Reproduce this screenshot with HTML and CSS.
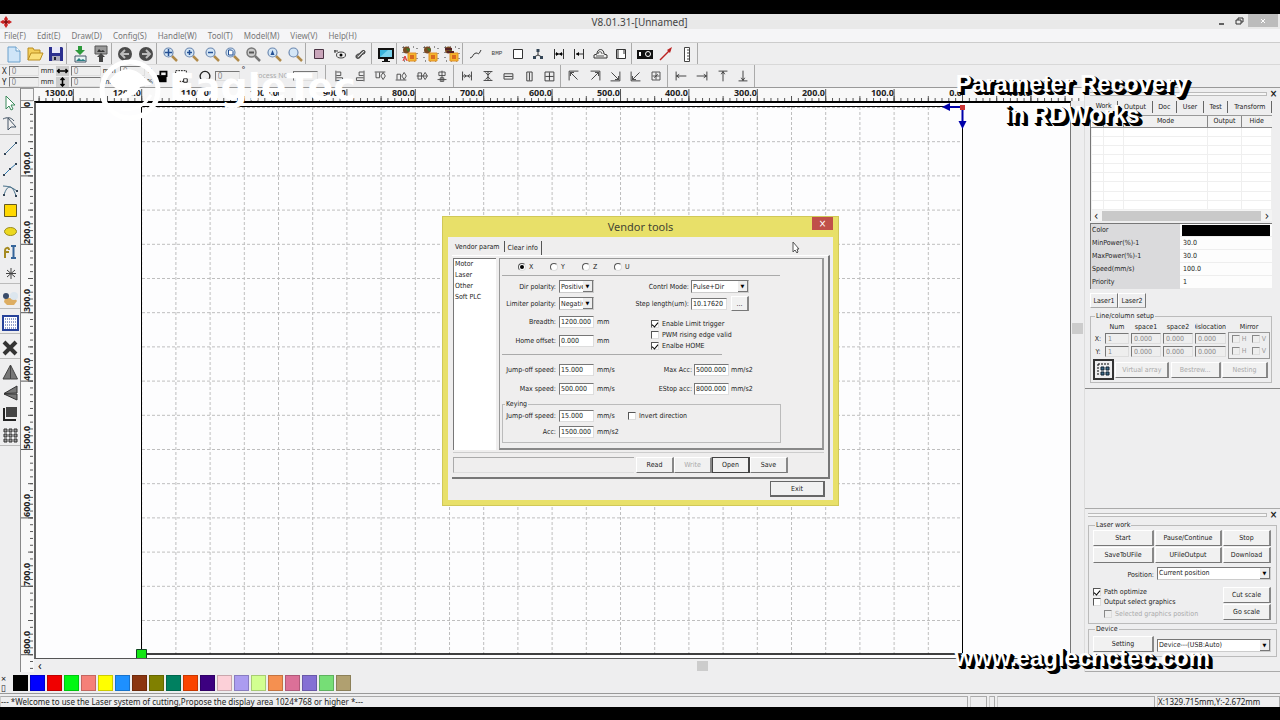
FILE: index.html
```html
<!DOCTYPE html>
<html lang="en">
<head>
<meta charset="utf-8">
<title>V8.01.31-[Unnamed]</title>
<link rel="stylesheet" href="styles.css">
</head>
<body>
<svg class="defs" aria-hidden="true">
  <symbol id="lens" viewBox="0 0 18 18">
    <path d="M11 11l5 5" stroke="#b08a4a" stroke-width="2.500"/>
    <circle cx="7.500" cy="7.500" r="4.500" fill="#d4e6f6" stroke="#6c88b0" stroke-width="1.200"/>
  </symbol>
  <symbol id="blocks" viewBox="0 0 18 18">
    <path d="M2 2h14v14H2z" fill="none" stroke="#333" stroke-dasharray="1 4"/>
    <circle cx="5.500" cy="5" r="3.500" fill="#7a4a22"/><path d="M5 3l4 1-2 3z" fill="#3a7a2a"/>
    <path d="M7 8h8v8H7z" fill="#f5b62c" stroke="#e0902a"/><path d="M9 10h4v4H9z" fill="#d96a20"/>
  </symbol>
</svg>

<div class="app">
  <header class="titlebar">
    <svg class="logo" viewBox="0 0 12 12"><path d="M6 0l2 3-1 2 2-1 3 2-3 2-2-1 1 2-2 3-2-3 1-2-2 1-3-2 3-2 2 1-1-2z" fill="#c22"/><path d="M6 4v4M4 6h4" stroke="#611"/></svg>
    <h1>V8.01.31-[Unnamed]</h1>
    <div class="winbtns">
      <button aria-label="Minimize"><svg viewBox="0 0 10 10"><path d="M2 8h5" stroke="#333" stroke-width="1.500"/></svg></button>
      <button aria-label="Restore"><svg viewBox="0 0 10 10"><path d="M2 4h5v4H2zM4 4V2h5v4H7" fill="none" stroke="#333"/></svg></button>
      <button class="close" aria-label="Close"><svg viewBox="0 0 10 10"><path d="M3 3l4 4M7 3l-4 4" stroke="#fff"/></svg></button>
    </div>
  </header>

  <nav class="menu">
    <button>File(F)</button><button>Edit(E)</button><button>Draw(D)</button><button>Config(S)</button><button>Handle(W)</button><button>Tool(T)</button><button>Model(M)</button><button>View(V)</button><button>Help(H)</button>
  </nav>

  <div class="toolbar">
    <div class="group g3">
      <button aria-label="New"><svg viewBox="0 0 18 18"><path d="M3 2h8l4 4v11H3z" fill="#cfe5f8" stroke="#6aa0cc"/><path d="M11 2v4h4" fill="#fff" stroke="#6aa0cc"/></svg></button>
      <button aria-label="Open"><svg viewBox="0 0 18 18"><path d="M2 15V3h5l1 2h6v3" fill="#f4cf5a" stroke="#b98c20"/><path d="M2 15L5 8h12l-3 7z" fill="#fbe07a" stroke="#b98c20"/></svg></button>
      <button aria-label="Save"><svg viewBox="0 0 18 18"><path d="M2 2h13l1 1v13H2z" fill="#2b2f8f"/><path d="M5 2h8v6H5z" fill="#e8e8f8"/><path d="M5 11h8v5H5z" fill="#aab"/><path d="M7 12h2v3H7z" fill="#223"/></svg></button>
    </div>
    <div class="group g2">
      <button aria-label="Import"><svg viewBox="0 0 18 18"><path d="M7 1h4v4h3l-5 5-5-5h3z" fill="#2d9a3c"/><path d="M4 11h11v6H4z" fill="#e8f4f4" stroke="#456"/><path d="M5 16l3-3 2 2 2-1 3 2z" fill="#2a7f86"/></svg></button>
      <button aria-label="Export"><svg viewBox="0 0 18 18"><path d="M3 1h12v8H3z" fill="#999" stroke="#555"/><path d="M5 7l2-3 2 2 2-1 2 2z" fill="#333"/><path d="M9 8l4 4h-2v5H7v-5H5z" fill="#444"/></svg></button>
    </div>
    <div class="group g2">
      <button aria-label="Undo"><svg viewBox="0 0 18 18"><circle cx="9" cy="9" r="7" fill="#4a4a4a"/><path d="M13 9H6M9 5L5 9l4 4" fill="none" stroke="#bbb" stroke-width="2"/></svg></button>
      <button aria-label="Redo"><svg viewBox="0 0 18 18"><circle cx="9" cy="9" r="7" fill="#4a4a4a"/><path d="M5 9h7M9 5l4 4-4 4" fill="none" stroke="#bbb" stroke-width="2"/></svg></button>
    </div>
    <div class="group g7">
      <button aria-label="Pan"><svg viewBox="0 0 18 18"><use href="#lens"/><path d="M7.500 4v7M4 7.500h7" stroke="#234f94" stroke-width="1.500"/></svg></button>
      <button aria-label="Zoom in"><svg viewBox="0 0 18 18"><use href="#lens"/><path d="M7.500 5v5M5 7.500h5" stroke="#234f94" stroke-width="1.500"/></svg></button>
      <button aria-label="Zoom out"><svg viewBox="0 0 18 18"><use href="#lens"/><path d="M5 7.500h5" stroke="#234f94" stroke-width="1.500"/></svg></button>
      <button aria-label="View page"><svg viewBox="0 0 18 18"><use href="#lens"/><path d="M5.500 5h3l1.500 1.500V10H5.500z" fill="#fff" stroke="#234f94"/></svg></button>
      <button aria-label="View all"><svg viewBox="0 0 18 18"><path d="M11 11l5 5" stroke="#777" stroke-width="2.500"/><circle cx="7.500" cy="7.500" r="4.500" fill="#ccc" stroke="#777" stroke-width="1.500"/><path d="M5 7.500h5" stroke="#555" stroke-width="2"/></svg></button>
      <button aria-label="View selection"><svg viewBox="0 0 18 18"><use href="#lens"/><path d="M5.500 10l2-5 2 5z" fill="#234f94"/></svg></button>
      <button aria-label="View frame"><svg viewBox="0 0 18 18"><use href="#lens"/></svg></button>
    </div>
    <div class="group g3">
      <button aria-label="Frame"><svg viewBox="0 0 18 18"><path d="M4.500 4.500h9v9h-9z" fill="#c9a5ba" stroke="#4a3344"/></svg></button>
      <button aria-label="Weld"><svg viewBox="0 0 18 18"><ellipse cx="10" cy="10" rx="4.500" ry="3" fill="none" stroke="#444"/><circle cx="10" cy="10" r="1.500"/><path d="M3 6h4M4 5v3" stroke="#333"/></svg></button>
      <button aria-label="Clean"><svg viewBox="0 0 18 18"><path d="M4 12c0-4 3-2 4-4s5-4 5-1-3 1-4 4-5 3-5 1z" fill="#777" stroke="#333"/><path d="M6 12l6-6" stroke="#ddd"/></svg></button>
    </div>
    <div class="group g1">
      <button aria-label="Preview"><svg viewBox="0 0 18 18"><path d="M1 3h16v11H1z" fill="#111"/><path d="M3 5h12v7H3z" fill="#3bb4dc"/><path d="M3 12l8-7h4v7z" fill="#79d3ee"/><path d="M7 14h4v2h2v1H5v-1h2z" fill="#111"/></svg></button>
    </div>
    <div class="group g3">
      <button aria-label="Path A"><svg viewBox="0 0 18 18"><use href="#blocks"/><path d="M2 16l2-5 2 5M3 14h2" fill="none" stroke="#d33"/></svg></button>
      <button aria-label="Path B"><svg viewBox="0 0 18 18"><use href="#blocks"/></svg></button>
      <button aria-label="Path C"><svg viewBox="0 0 18 18"><use href="#blocks"/><path d="M2 4h7M4 7h7" stroke="#522" stroke-width="2"/></svg></button>
    </div>
    <div class="group g8">
      <button aria-label="Smooth"><svg viewBox="0 0 18 18"><path d="M3 13c3 0 3-5 6-5s2 3 5-3" fill="none" stroke="#333"/></svg></button>
      <button class="bmp">BMP</button>
      <button aria-label="Rectangle"><svg viewBox="0 0 18 18"><path d="M4.500 4.500h9v9h-9z" fill="#fff" stroke="#333"/></svg></button>
      <button aria-label="Nodes"><svg viewBox="0 0 18 18"><path d="M9 6v4M5 12l4-2 4 2" fill="none" stroke="#333"/><path d="M7.500 4h3v3h-3zM4 11h3v3H4zM11 11h3v3h-3z" fill="#345"/></svg></button>
      <button aria-label="Gap"><svg viewBox="0 0 18 18"><path d="M4.500 4v10M13.500 4v10M4 9h10" fill="none" stroke="#333"/><path d="M6 7l3 2-3 2zM12 7l-3 2 3 2z"/></svg></button>
      <button aria-label="Offset"><svg viewBox="0 0 18 18"><path d="M4.500 4v10M13.500 4v10M6 9h7" fill="none" stroke="#333"/><path d="M9 7l-3 2 3 2z"/></svg></button>
      <button aria-label="Outline"><svg viewBox="0 0 18 18"><path d="M3 13v-3l3-1c0-6 7-6 7 0l3 1v3z" fill="#eee" stroke="#333"/><path d="M5 11h8M7 9c0-3 4-3 4 0" fill="none" stroke="#555"/></svg></button>
      <button aria-label="Ruler frame"><svg viewBox="0 0 18 18"><path d="M4.500 4.500h9v9h-9z" fill="#fff" stroke="#333"/><path d="M5 6h2M5 8h2M5 10h2M5 12h2M11 6h2M11 8h2" stroke="#333"/></svg></button>
    </div>
    <div class="group g3">
      <button aria-label="Camera"><svg viewBox="0 0 18 18"><path d="M1 5h16v9H1z" fill="#111"/><circle cx="12" cy="9" r="2.500" fill="none" stroke="#fff"/><path d="M3 7h2v4H3z" fill="#fff"/></svg></button>
      <button aria-label="Laser line"><svg viewBox="0 0 18 18"><path d="M3 15L13 5" stroke="#b22" stroke-width="1.500"/><path d="M15 2l-2 6-3-3z" fill="#b22"/></svg></button>
      <button aria-label="Measure"><svg viewBox="0 0 18 18"><path d="M6.500 2.500h5v14h-5z" fill="#fff" stroke="#444"/><path d="M9 5h2M9 8h2M9 11h2M9 14h2" stroke="#444"/></svg></button>
    </div>
  </div>

  <div class="toolbar second">
    <div class="coords">
      <label>X <input class="w30" value="0"></label><span>mm</span>
      <label>Y <input class="w30" value="0"></label><span>mm</span>
    </div>
    <div class="coords size">
      <label><svg viewBox="0 0 12 10"><path d="M1 5h10M3 3L1 5l2 2M9 3l2 2-2 2" fill="none" stroke="#000" stroke-width="1.500"/></svg><input class="w30" aria-label="Width" value="0"></label><span>mm</span>
      <label><svg viewBox="0 0 12 10"><path d="M6 1v8M4 3l2-2 2 2M4 7l2 2 2-2" fill="none" stroke="#000" stroke-width="1.500"/></svg><input class="w30" aria-label="Height" value="0"></label><span>mm</span>
    </div>
    <div class="coords">
      <input class="w24" aria-label="Width scale" value="0"><span>%</span>
      <input class="w24" aria-label="Height scale" value="0"><span>%</span>
    </div>
    <div class="group rot">
      <button aria-label="Lock ratio"><svg viewBox="0 0 18 18"><path d="M2 8h11v8H2z"/><path d="M6 8V4h7v6" fill="none" stroke="#000" stroke-width="2"/></svg></button>
      <button aria-label="Anchor"><svg viewBox="0 0 18 18"><path d="M3 3h12v12H3z" fill="#fff" stroke="#000" stroke-dasharray="2 1"/><path d="M12 12h4v4h-4z" fill="#fff" stroke="#000"/></svg></button>
      <button class="turn" aria-label="Rotate"><svg viewBox="0 0 18 18"><path d="M6 14A5.500 5.500 0 1 1 12 14" fill="none" stroke="#222" stroke-width="1.500"/><path d="M10 12l5 0-3 4z"/></svg></button>
      <input class="w24" aria-label="Angle" value="0"><span>°</span>
      <label class="proc">Process NO: <input class="w24"></label>
    </div>
    <div class="group g6">
      <button aria-label="Align left"><svg viewBox="0 0 18 18"><path d="M5.500 3v12M6 4.500h5v4H6M6 11h7v3H6" fill="none" stroke="#444"/></svg></button>
      <button aria-label="Align right"><svg viewBox="0 0 18 18"><path d="M13.500 3v12M13 4.500H8v4h5M13 11H5v3h8" fill="none" stroke="#444"/></svg></button>
      <button aria-label="Align top"><svg viewBox="0 0 18 18"><path d="M3 4.500h12M4.500 5v6h4V5M10 9l2.500-4 2.500 4-2.500 4z" fill="none" stroke="#444"/></svg></button>
      <button aria-label="Align bottom"><svg viewBox="0 0 18 18"><path d="M3 13.500h12M4.500 13V7h4v6M10 9l2.500-4 2.500 4-2.500 4z" fill="none" stroke="#444"/></svg></button>
      <button aria-label="Align middle"><svg viewBox="0 0 18 18"><path d="M3 9h12M4.500 5.500h4v7h-4zM10 9l2.500-4 2.500 4-2.500 4z" fill="none" stroke="#444"/></svg></button>
      <button aria-label="Align centre"><svg viewBox="0 0 18 18"><path d="M9 3v12M5.500 4.500h7v4h-7zM4 13h10M7 11h4v4H7z" fill="none" stroke="#444"/></svg></button>
    </div>
    <div class="group g5">
      <button aria-label="Space horizontally"><svg viewBox="0 0 18 18"><path d="M4 4v10M14 4v10M4 9h10M6 7l2 2-2 2M12 7l-2 2 2 2" fill="none" stroke="#333"/></svg></button>
      <button aria-label="Space vertically"><svg viewBox="0 0 18 18"><path d="M4 4h10M4 14h10M9 4v10M6 5l3 3 3-3M6 13l3-3 3 3" fill="none" stroke="#333"/></svg></button>
      <button aria-label="Same width"><svg viewBox="0 0 18 18"><path d="M4.500 6.500h10v6h-10zM5 9.500h9" fill="none" stroke="#333"/></svg></button>
      <button aria-label="Same height"><svg viewBox="0 0 18 18"><path d="M6.500 4.500h6v10h-6zM9.500 5v9" fill="none" stroke="#333"/></svg></button>
      <button aria-label="Same size"><svg viewBox="0 0 18 18"><path d="M4.500 4.500h10v10h-10zM9.500 5v9M5 9.500h9" fill="none" stroke="#333"/></svg></button>
    </div>
    <div class="group g5">
      <button aria-label="To top left"><svg viewBox="0 0 18 18"><path d="M3.500 14V3.500H14M5 5l8 8M5 9V5h4" fill="none" stroke="#333"/></svg></button>
      <button aria-label="To top right"><svg viewBox="0 0 18 18"><path d="M4 3.500h10.500V14M13 5l-8 8M13 9V5H9" fill="none" stroke="#333"/></svg></button>
      <button aria-label="To bottom right"><svg viewBox="0 0 18 18"><path d="M4 14.500h10.500V4M13 13L5 5M9 13h4V9" fill="none" stroke="#333"/></svg></button>
      <button aria-label="To bottom left"><svg viewBox="0 0 18 18"><path d="M3.500 4v10.500H14M5 13l8-8M5 9v4h4" fill="none" stroke="#333"/></svg></button>
      <button aria-label="To centre"><svg viewBox="0 0 18 18"><path d="M4.500 4.500h9v9h-9zM9 5v8M5 9h8M7 11l4-4" fill="none" stroke="#444"/></svg></button>
    </div>
    <div class="group g4">
      <button aria-label="To left"><svg viewBox="0 0 18 18"><path d="M3.500 4v10M4 9h11M7 7L4 9l3 2" fill="none" stroke="#333"/></svg></button>
      <button aria-label="To right"><svg viewBox="0 0 18 18"><path d="M14.500 4v10M14 9H3M11 7l3 2-3 2" fill="none" stroke="#333"/></svg></button>
      <button aria-label="To top"><svg viewBox="0 0 18 18"><path d="M4 3.500h10M9 4v11M7 7l2-3 2 3" fill="none" stroke="#333"/></svg></button>
      <button aria-label="To bottom"><svg viewBox="0 0 18 18"><path d="M4 14.500h10M9 14V3M7 11l2 3 2-3" fill="none" stroke="#333"/></svg></button>
    </div>
  </div>

  <main class="work">
    <div class="tools">
      <div class="vgroup v2">
        <button aria-label="Select"><svg viewBox="0 0 18 18"><path d="M5 2l9 9-4 0 2 4-2 1-2-4-3 3z" fill="#fff" stroke="#3a8a5a"/></svg></button>
        <button aria-label="Edit nodes"><svg viewBox="0 0 18 18"><path d="M2 4c4-2 8-2 11 2M7 3v12l3-3h5z" fill="none" stroke="#456"/></svg></button>
      </div>
      <div class="vgroup v7">
        <button aria-label="Line"><svg viewBox="0 0 18 18"><path d="M4 15L15 4" stroke="#46789c"/><path d="M3 14h2v2H3zM14 3h2v2h-2z" fill="#345"/></svg></button>
        <button aria-label="Polyline"><svg viewBox="0 0 18 18"><path d="M3 15l6-6 6-5" stroke="#2d76ac" fill="none"/><path d="M2 14h2v2H2zM8 8h2v2H8zM14 3h2v2h-2z" fill="#345"/></svg></button>
        <button aria-label="Bezier"><svg viewBox="0 0 18 18"><path d="M3 14C6 4 11 2 15 15M2 5c6 0 10 2 14 5" fill="none" stroke="#456e88"/><path d="M2 13h2v2H2zM14 14h2v2h-2zM15 9h2v2h-2z" fill="#345"/></svg></button>
        <button aria-label="Rectangle"><svg viewBox="0 0 18 18"><path d="M3.500 3.500h12v12h-12z" fill="#ffd800" stroke="#665a20"/></svg></button>
        <button aria-label="Ellipse"><svg viewBox="0 0 18 18"><ellipse cx="9.500" cy="9.500" rx="6" ry="4" fill="#ecd820" stroke="#9a8c20"/></svg></button>
        <button aria-label="Text"><svg viewBox="0 0 18 18"><path d="M4 15V8c0-4 4-4 4-1M3 9h5" fill="none" stroke="#a58a20" stroke-width="2"/><path d="M10 3h5M10 15h5M12.500 3v12" stroke="#36659a" stroke-width="2"/></svg></button>
        <button aria-label="Point"><svg viewBox="0 0 18 18"><path d="M10 4v11M5 9.500h10M6 6l8 7M14 6l-8 7" stroke="#444"/></svg></button>
      </div>
      <div class="vgroup v1"><button aria-label="Capture"><svg viewBox="0 0 18 18"><path d="M4 9h10l2 3-3 4H6l-3-3z" fill="#ddad62"/><circle cx="5" cy="7" r="3" fill="#3a4c6a"/><circle cx="13" cy="7" r="4" fill="#dce6ee"/></svg></button></div>
      <div class="vgroup v1"><button aria-label="Grid"><svg viewBox="0 0 18 18"><path d="M2 2h15v14H2z" fill="#fff" stroke="#26429a" stroke-width="2"/><path d="M4 5h12M4 8h12M4 11h12M4 14h12" stroke="#26429a" stroke-dasharray="1 1"/></svg></button></div>
      <div class="vgroup v1"><button aria-label="Delete"><svg viewBox="0 0 18 18"><path d="M3 3l12 12M15 3L3 15" stroke="#333" stroke-width="4"/></svg></button></div>
      <div class="vgroup v4">
        <button aria-label="Mirror vertically"><svg viewBox="0 0 18 18"><path d="M9.500 2v14H2zM9.500 2l7 14h-7z" fill="#777" stroke="#444"/></svg></button>
        <button aria-label="Mirror horizontally"><svg viewBox="0 0 18 18"><path d="M3 9.500L16 2v7zM3 10l13 6v-6z" fill="#777" stroke="#333"/></svg></button>
        <button aria-label="Origin"><svg viewBox="0 0 18 18"><path d="M5 2h11v10H5z" fill="#444"/><path d="M3 3v12h12" fill="none" stroke="#222" stroke-width="2"/></svg></button>
        <button aria-label="Array"><svg viewBox="0 0 18 18"><path d="M3 3h3v3H3zM8 3h3v3H8zM13 3h3v3h-3zM3 8h3v3H3zM8 8h3v3H8zM13 8h3v3h-3zM3 13h3v3H3zM8 13h3v3H8zM13 13h3v3h-3z" fill="#999" stroke="#333"/></svg></button>
      </div>
    </div>

    <div class="stage">
      <div class="corner"></div>
      <svg class="hruler">
        <defs>
          <pattern id="hs" patternUnits="userSpaceOnUse" x="962" y="88" width="6.840" height="13"><path d="M.5 10v3" stroke="#555"/></pattern>
          <pattern id="hm" patternUnits="userSpaceOnUse" x="962" y="88" width="34.200" height="13"><path d="M.5 8v5" stroke="#555"/></pattern>
          <pattern id="hl" patternUnits="userSpaceOnUse" x="962" y="88" width="68.400" height="13"><path d="M.5 1v12" stroke="#555"/></pattern>
        </defs>
        <g transform="translate(-34 -88)">
          <g text-anchor="end">
            <text x="73" y="96">1300.0</text><text x="141" y="96">1200.0</text><text x="209" y="96">1100.0</text><text x="278" y="96">1000.0</text><text x="346" y="96">900.0</text><text x="415" y="96">800.0</text><text x="483" y="96">700.0</text><text x="552" y="96">600.0</text><text x="620" y="96">500.0</text><text x="688" y="96">400.0</text><text x="757" y="96">300.0</text><text x="825" y="96">200.0</text><text x="894" y="96">100.0</text><text x="962" y="96">0.0</text><text x="1031" y="96">-100.0</text>
          </g>
          <rect x="34" y="88" width="100%" height="13" fill="url(#hs)"/>
          <rect x="34" y="88" width="100%" height="13" fill="url(#hm)"/>
          <rect x="34" y="88" width="100%" height="13" fill="url(#hl)"/>
        </g>
      </svg>
      <svg class="vruler">
        <defs>
          <pattern id="vs" patternUnits="userSpaceOnUse" x="21" y="107" width="13" height="6.840"><path d="M9 .5h3" stroke="#555"/></pattern>
          <pattern id="vm" patternUnits="userSpaceOnUse" x="21" y="107" width="13" height="34.200"><path d="M7 .5h5" stroke="#555"/></pattern>
          <pattern id="vl" patternUnits="userSpaceOnUse" x="21" y="107" width="13" height="68.400"><path d="M0 .5h12" stroke="#555"/></pattern>
        </defs>
        <g transform="translate(-21 -101)">
          <text transform="translate(30 107) rotate(-90)">0</text>
          <text transform="translate(30 175) rotate(-90)">100.0</text>
          <text transform="translate(30 244) rotate(-90)">200.0</text>
          <text transform="translate(30 312) rotate(-90)">300.0</text>
          <text transform="translate(30 381) rotate(-90)">400.0</text>
          <text transform="translate(30 449) rotate(-90)">500.0</text>
          <text transform="translate(30 517) rotate(-90)">600.0</text>
          <text transform="translate(30 586) rotate(-90)">700.0</text>
          <text transform="translate(30 654) rotate(-90)">800.0</text>
          <rect x="21" y="101" width="13" height="100%" fill="url(#vs)"/>
          <rect x="21" y="101" width="13" height="100%" fill="url(#vm)"/>
          <rect x="21" y="101" width="13" height="100%" fill="url(#vl)"/>
        </g>
      </svg>
      <div class="canvas">
        <svg>
          <defs>
            <pattern id="gx" patternUnits="userSpaceOnUse" x="962" y="107" width="34.200" height="5"><path d="M.5 0v3" stroke="#bdbdbd"/></pattern>
            <pattern id="gy" patternUnits="userSpaceOnUse" x="142" y="107" width="5" height="34.200"><path d="M0 .5h3" stroke="#bdbdbd"/></pattern>
          </defs>
          <g transform="translate(-36 -103)">
            <rect x="142" y="107" width="820" height="547" fill="url(#gx)"/>
            <rect x="142" y="107" width="820" height="547" fill="url(#gy)"/>
            <path d="M141.500 654V106.500H962.500V654z" fill="none" stroke="#000"/>
            <path d="M136 654h827" stroke="#000"/>
            <path d="M962 107h-17M962.500 107v18" stroke="#00a" stroke-width="2"/>
            <path d="M942 107l8-4v8zM962.500 129l-4-8h8z" fill="#00a"/>
            <path d="M960 105h5v5h-5z" fill="#c33"/>
            <path d="M136.500 649.500h10v9h-10z" fill="#14e614" stroke="#142"/>
          </g>
        </svg>
      </div>
      <div class="vscroll"><i></i></div>
      <div class="hscroll"><span>‹</span><i></i></div>
    </div>

    <aside class="side">
      <section class="dock">
        <div class="grip"><i></i><button aria-label="Close panel">×</button></div>
        <nav class="tabs"><button class="on">Work</button><button>Output</button><button>Doc</button><button>User</button><button>Test</button><button>Transform</button></nav>
        <div class="layers">
          <table>
            <colgroup><col class="c1"><col class="c2"><col class="c3"><col class="c4"><col></colgroup>
            <thead><tr><th></th><th></th><th>Mode</th><th>Output</th><th>Hide</th></tr></thead>
            <tbody>
              <tr><td></td><td></td><td></td><td></td><td></td></tr><tr><td></td><td></td><td></td><td></td><td></td></tr><tr><td></td><td></td><td></td><td></td><td></td></tr><tr><td></td><td></td><td></td><td></td><td></td></tr><tr><td></td><td></td><td></td><td></td><td></td></tr><tr><td></td><td></td><td></td><td></td><td></td></tr><tr><td></td><td></td><td></td><td></td><td></td></tr><tr><td></td><td></td><td></td><td></td><td></td></tr><tr><td></td><td></td><td></td><td></td><td></td></tr>
            </tbody>
          </table>
          <div class="bar"><span>‹</span><i></i><span>›</span></div>
        </div>
        <dl class="props">
          <dt>Color</dt><dd><i class="ink"></i></dd>
          <dt>MinPower(%)-1</dt><dd>30.0</dd>
          <dt>MaxPower(%)-1</dt><dd>30.0</dd>
          <dt>Speed(mm/s)</dt><dd>100.0</dd>
          <dt>Priority</dt><dd>1</dd>
        </dl>
        <nav class="lasers"><button>Laser1</button><button>Laser2</button></nav>
        <fieldset class="array">
          <legend>Line/column setup</legend>
          <div class="matrix">
            <span></span><span>Num</span><span>space1</span><span>space2</span><span class="clip">Dislocation</span><span>Mirror</span>
            <span>X:</span><input disabled aria-label="X num" value="1"><input disabled aria-label="X space1" value="0.000"><input disabled aria-label="X space2" value="0.000"><input disabled aria-label="X dislocation" value="0.000">
            <div class="mirror">
              <label><input type="checkbox" disabled>H</label><label><input type="checkbox" disabled>V</label>
              <label><input type="checkbox" disabled>H</label><label><input type="checkbox" disabled>V</label>
            </div>
            <span>Y:</span><input disabled aria-label="Y num" value="1"><input disabled aria-label="Y space1" value="0.000"><input disabled aria-label="Y space2" value="0.000"><input disabled aria-label="Y dislocation" value="0.000">
          </div>
          <div class="arrbtns">
            <button class="arricon" aria-label="Array mode"><svg viewBox="0 0 16 16"><path d="M2 2h12M2 2v12" stroke="#000" stroke-dasharray="2 1"/><path d="M5 5h3v3H5zM10 5h3v3h-3zM5 10h3v3H5zM10 10h3v3h-3z" fill="#3a6a8a" stroke="#123"/></svg></button>
            <button class="btn w54" disabled>Virtual array</button><button class="btn w50" disabled>Bestrew...</button><button class="btn w46" disabled>Nesting</button>
          </div>
        </fieldset>
      </section>
      <section class="dock lower">
        <div class="grip"><i></i><button aria-label="Close panel">×</button></div>
        <fieldset class="laser">
          <legend>Laser work</legend>
          <div class="lgrid">
            <button class="btn">Start</button><button class="btn">Pause/Continue</button><button class="btn">Stop</button>
            <button class="btn">SaveToUFile</button><button class="btn">UFileOutput</button><button class="btn">Download</button>
            <label class="right" for="pos">Position:</label>
            <span class="sel span2"><select id="pos"><option>Current position</option></select></span>
          </div>
          <div class="opts">
            <div>
              <label><input type="checkbox" checked>Path optimize</label>
              <label><input type="checkbox">Output select graphics</label>
              <label class="sub"><input type="checkbox" disabled>Selected graphics position</label>
            </div>
            <div class="scale"><button class="btn">Cut scale</button><button class="btn">Go scale</button></div>
          </div>
        </fieldset>
        <fieldset class="device">
          <legend>Device</legend>
          <div class="lgrid">
            <button class="btn">Setting</button>
            <span class="sel span2"><select aria-label="Device"><option>Device---(USB:Auto)</option></select></span>
          </div>
        </fieldset>
      </section>
    </aside>
  </main>

  <div class="palette">
    <div class="ctl"><span>×</span><span>▯</span></div>
    <button class="k1" aria-label="Black"></button><button class="k2" aria-label="Blue"></button><button class="k3" aria-label="Red"></button><button class="k4" aria-label="Green"></button><button class="k5" aria-label="Salmon"></button><button class="k6" aria-label="Yellow"></button><button class="k7" aria-label="Sky"></button><button class="k8" aria-label="Brown"></button><button class="k9" aria-label="Olive"></button><button class="k10" aria-label="Teal"></button><button class="k11" aria-label="Orange red"></button><button class="k12" aria-label="Indigo"></button><button class="k13" aria-label="Pink"></button><button class="k14" aria-label="Lilac"></button><button class="k15" aria-label="Lime"></button><button class="k16" aria-label="Orange"></button><button class="k17" aria-label="Rose"></button><button class="k18" aria-label="Violet"></button><button class="k19" aria-label="Light green"></button><button class="k20" aria-label="Khaki"></button>
  </div>

  <footer class="status">
    <span class="msg">--- *Welcome to use the Laser system of cutting,Propose the display area 1024*768 or higher *---</span><span class="p1"></span><span class="p2"></span><span class="p3"></span><span class="p4">X:1329.715mm,Y:-2.672mm</span>
  </footer>
</div>

<div class="dialog" role="dialog" aria-labelledby="dlg">
  <div class="dhead"><h2 id="dlg">Vendor tools</h2><button aria-label="Close dialog">×</button></div>
  <div class="dbody">
    <nav class="dtabs"><button class="on">Vendor param</button><button>Clear info</button></nav>
    <div class="sheet">
      <div class="panes">
        <ul class="list"><li>Motor</li><li>Laser</li><li>Other</li><li>Soft PLC</li></ul>
        <div class="params">
          <div class="axes">
            <label><input type="radio" name="axis" checked>X</label><label><input type="radio" name="axis">Y</label><label><input type="radio" name="axis">Z</label><label><input type="radio" name="axis">U</label>
          </div>
          <div class="two first">
            <div class="rows top">
              <label for="dir">Dir polarity:</label><span class="sel"><select id="dir"><option>Positive</option></select></span><span></span>
              <label for="lim">Limiter polarity:</label><span class="sel"><select id="lim"><option>Negative</option></select></span><span></span>
              <label for="br">Breadth:</label><input id="br" value="1200.000"><span>mm</span>
              <label for="ho">Home offset:</label><input id="ho" value="0.000"><span>mm</span>
            </div>
            <div>
              <div class="rows mode">
                <label for="cm">Contrl Mode:</label><span class="sel"><select id="cm"><option>Pulse+Dir</option></select></span>
                <label for="sl">Step length(um):</label><span class="step"><input id="sl" value="10.17620"><button class="btn">...</button></span>
              </div>
              <div class="checks">
                <label><input type="checkbox" checked>Enable Limit trigger</label>
                <label><input type="checkbox">PWM rising edge valid</label>
                <label><input type="checkbox" checked>Enalbe HOME</label>
              </div>
            </div>
          </div>
          <div class="two speeds">
            <div class="rows">
              <label for="js">Jump-off speed:</label><input id="js" value="15.000"><span>mm/s</span>
              <label for="ms">Max speed:</label><input id="ms" value="500.000"><span>mm/s</span>
            </div>
            <div class="rows acc">
              <label for="ma">Max Acc:</label><input id="ma" value="5000.000"><span>mm/s2</span>
              <label for="ea">EStop acc:</label><input id="ea" value="8000.000"><span>mm/s2</span>
            </div>
          </div>
          <fieldset class="keying">
            <legend>Keying</legend>
            <div class="rows">
              <label for="kj">Jump-off speed:</label><input id="kj" value="15.000"><span>mm/s</span><label class="inv"><input type="checkbox">Invert direction</label>
              <label for="ka">Acc:</label><input id="ka" value="1500.000"><span>mm/s2</span><span></span>
            </div>
          </fieldset>
        </div>
      </div>
      <div class="actions"><div class="progress"></div><button class="btn">Read</button><button class="btn" disabled>Write</button><button class="btn def">Open</button><button class="btn">Save</button></div>
    </div>
    <button class="btn exit">Exit</button>
  </div>
</div>

<svg class="cursor" viewBox="0 0 8 13"><path d="M1 1v10l2-2 2 3 1-1-1-3h2z" fill="#fff" stroke="#555"/></svg>

<div class="brand">
  <svg viewBox="0 0 62 62"><circle cx="31" cy="31" r="28" fill="none" stroke="#fff" stroke-width="5"/><path d="M10 22c8-12 20-15 30-8 6 4 9 9 14 11-5 2-9 1-13 3-3 8-12 14-31 10 8 0 16-3 19-7-8 1-14-1-19-9z" fill="#fff"/><path d="M22 50c14 2 24-4 30-14" fill="none" stroke="#fff" stroke-width="3"/></svg>
  <span>EagleTec</span>
</div>
<p class="caption head">Parameter Recovery<br>in RDWorks</p>
<p class="caption site">www.eaglecnctec.com</p>
</body>
</html>
```

FILE: styles.css
```css
* { box-sizing: border-box; }
body {
  margin: 0;
  height: 100vh;
  padding: 14px 0 13px;
  background: #000;
  position: relative;
  overflow: hidden;
  font: 8px/10px "Noto Sans", "Open Sans", sans-serif;
  color: #222;
}
button, input, select { font: inherit; color: inherit; margin: 0; padding: 0; border: 0; background: none; border-radius: 0; }
button { white-space: nowrap; }
.defs { position: absolute; width: 0; height: 0; }
.app { height: 100%; display: flex; flex-direction: column; background: #eeeeef; }

.titlebar { display: flex; align-items: center; height: 15px; background: #e9e9e9; }
.logo { width: 12px; height: 12px; }
.titlebar h1 { flex: 1; margin: 0; padding-left: 54px; text-align: center; font-size: 10px; line-height: 14px; font-weight: 400; color: #444; }
.winbtns { display: flex; height: 13px; align-self: flex-start; }
.winbtns button { width: 17px; display: grid; place-items: center; }
.winbtns svg { width: 10px; height: 10px; }
.winbtns .close { width: 30px; background: #bcbcbc; margin: 0 2px 0 1px; }

.menu { display: flex; gap: 11px; height: 14px; padding-left: 4px; background: #f5f5f7; border-bottom: 1px solid #ccc; color: #777; }
.menu button { line-height: 13px; }

.toolbar { display: flex; height: 22px; padding-left: 4px; border-bottom: 1px solid #d8d8d8; }
.second { height: 23px; padding-left: 2px; border-bottom: 1px solid #999; }
.group { display: grid; grid-auto-flow: column; grid-auto-columns: 1fr; align-items: center; border-right: 1px solid #aaa; padding-right: 0; margin-right: 3px; box-sizing: content-box; }
.group button { display: grid; place-items: center; }
.group svg, .vgroup svg { width: 18px; height: 18px; display: block; }
.second .group svg { width: 16px; height: 16px; }
.g1 { width: 21px; } .g2 { width: 41px; } .g3 { width: 62px; } .g4 { width: 83px; }
.g5 { width: 103px; } .g6 { width: 124px; } .g7 { width: 145px; } .g8 { width: 165px; }
.group .bmp { font-size: 6px; font-family: "Liberation Mono", monospace; color: #444; }

input { background: #fff; border: 1px solid #777; border-right-color: #ddd; border-bottom-color: #ddd; height: 12px; padding-left: 2px; min-width: 0; }
.w30 { width: 30px; } .w24 { width: 25px; }
.coords { display: grid; grid-template-columns: auto auto; column-gap: 2px; align-content: center; row-gap: 1px; margin-right: 2px; }
.coords > span { font-size: 7px; }
.coords label { display: flex; align-items: center; gap: 2px; }
.coords input, .rot input { height: 10px; background: #eee; color: #888; }
.coords svg { width: 13px; height: 10px; background: #ccc; }
.size { margin-right: 4px; }
.rot { display: flex; width: 170px; gap: 2px; }
.rot .turn { margin-left: 6px; }
.rot span { align-self: start; }
.rot label { display: flex; align-items: center; gap: 2px; margin-left: 4px; color: #aaa; white-space: nowrap; font-size: 7px; }

.work { flex: 1; display: flex; min-height: 0; }
.tools { width: 21px; padding-top: 5px; border-right: 1px solid #888; }
.vgroup { display: grid; grid-auto-rows: 1fr; justify-items: center; border-bottom: 1px solid #bbb; margin-bottom: 3px; box-sizing: content-box; }
.vgroup button { display: grid; place-items: center; }
.v1 { height: 21px; } .v2 { height: 41px; } .v4 { height: 83px; } .v7 { height: 145px; }

.stage { flex: 1; min-width: 0; display: grid; grid-template: 13px minmax(0, 1fr) 13px / 13px minmax(0, 1fr) 13px; }
.corner { background: #f4f4f4; border: 1px solid #999; border-left: 0; }
.hruler { width: 100%; height: 13px; background: #f8f8f8; overflow: hidden; grid-column: 2 / 4; }
.vruler { width: 13px; height: 100%; background: #f8f8f8; overflow: hidden; grid-row: 2 / 4; grid-column: 1; }
.stage text { font: 700 9px "Noto Sans", sans-serif; fill: #222; }
.canvas { background: #fdfdfe; border: 2px solid #000; border-left-color: #666; border-right: 1px solid #777; border-bottom: 1px solid #555; min-width: 0; }
.canvas svg { display: block; width: 100%; height: 100%; }
.vscroll { display: grid; align-content: center; justify-content: center; padding-bottom: 104px; }
.vscroll i { width: 11px; height: 11px; background: #ccc; }
.hscroll { display: flex; align-items: center; grid-column: 2 / 4; font-size: 12px; }
.hscroll span { padding-left: 4px; width: 12px; }
.hscroll i { width: 11px; height: 10px; margin-left: 62%; background: #ccc; }

.side, .dialog { font-family: "DejaVu Sans Condensed", "Noto Sans", sans-serif; font-size: 7px; }
.side { width: 196px; display: flex; flex-direction: column; justify-content: space-between; border-left: 1px solid #ddd; }
.dock { border-bottom: 1px solid #888; padding: 0 8px 5px 5px; }
.lower { border-top: 1px solid #aaa; border-bottom-color: #aaa; padding: 0 3px 14px 3px; }
.grip { display: flex; align-items: center; height: 12px; margin-right: -8px; }
.lower .grip { margin-right: -3px; }
.grip i { flex: 1; height: 4px; border: 1px solid #bbb; border-left: 0; background: #f6f6f6; }
.grip button { width: 13px; font-size: 10px; font-weight: 700; }
.tabs { display: flex; justify-content: space-between; height: 15px; padding-top: 1px; }
.tabs button { flex: auto; height: 12px; border-right: 1px solid #666; }
.tabs .on { height: 10px; }
.layers { border-left: 1px solid #777; border-top: 1px solid #999; background: #fff; }
table { width: 100%; height: 94px; border-collapse: collapse; table-layout: fixed; }
.c1 { width: 12px; } .c2 { width: 20px; } .c3 { width: 84px; } .c4 { width: 34px; }
th { font-weight: 400; padding: 0; height: 11px; background: #f0f0f0; border-right: 1px solid #888; border-bottom: 1px solid #888; line-height: 10px; }
th:last-child { border-right: 0; }
td { padding: 0; border: 1px solid #efefef; }
.bar { display: flex; align-items: center; height: 11px; font-size: 12px; line-height: 8px; padding: 0 3px; background: #f4f4f4; gap: 4px; }
.bar i { flex: 1; height: 10px; background: #c9c9c9; }
.props { display: grid; grid-template-columns: 89px 1fr; grid-auto-rows: 13px; margin: 2px 0 0; border-top: 1px solid #777; border-left: 1px solid #777; line-height: 13px; }
dt { background: #dadadc; padding-left: 1px; }
dd { margin: 0; padding-left: 3px; background: #fdfdfd; border-bottom: 1px solid #eee; }
.ink { display: block; height: 11px; background: #000; margin: 1px 2px 0 -1px; }
.lasers { display: flex; padding-top: 4px; height: 19px; }
.lasers button { width: 28px; border: 1px solid #fff; border-right-color: #777; border-bottom-color: #aaa; }
fieldset { border: 1px solid #bbb; margin: 0; padding: 0; min-width: 0; }
legend { margin-left: 2px; padding: 0 1px; line-height: 8px; }
.array { padding: 1px 3px 2px 2px; margin-top: 4px; }
.matrix { display: grid; grid-template-columns: 10px 24px 30px 30px 31px 42px; grid-template-rows: 11px 13px 13px; column-gap: 2px; align-items: center; justify-content: space-between; text-align: center; }
.matrix input { width: 100%; height: 11px; background: #eee; color: #888; line-height: 9px; }
.clip { display: flex; justify-content: flex-end; overflow: hidden; white-space: nowrap; }
.mirror { grid-row: 2 / 4; grid-column: 6; display: grid; grid-template-columns: 1fr 1fr; border: 1px solid #999; height: 27px; align-items: center; color: #999; }
.arrbtns { display: flex; align-items: center; justify-content: space-between; margin-top: 1px; }
.arricon { width: 21px; height: 21px; border: 2px solid #333; display: grid; place-items: center; }
.arricon svg { width: 16px; height: 16px; }
.w54 { width: 54px; } .w50 { width: 50px; } .w46 { width: 46px; }
.btn { height: 16px; background: #f1f1f1; border: 1px solid #fff; border-right: 2px solid #888; border-bottom: 1px solid #777; line-height: 12px; }
.btn:disabled { color: #aaa; }

input[type=checkbox], input[type=radio] { appearance: none; flex: none; width: 8px; height: 8px; padding: 0; border: 1px solid #555; border-right-color: #ddd; border-bottom-color: #ddd; background: #fff; display: grid; place-items: center; }
input[type=checkbox]:checked::after { content: ""; width: 3px; height: 5px; border: solid #000; border-width: 0 1px 1px 0; transform: rotate(40deg); }
input[type=checkbox]:disabled { background: #eee; border-color: #888 #ddd #ddd #888; }
input[type=radio] { border-radius: 50%; }
input[type=radio]:checked::after { content: ""; width: 4px; height: 4px; border-radius: 50%; background: #000; }
label:has(> input[type=checkbox]), label:has(> input[type=radio]) { display: flex; align-items: center; gap: 3px; white-space: nowrap; }
.mirror label:has(> input) { gap: 2px; justify-content: center; }

.laser, .device { padding: 1px 5px 3px 4px; }
.device { margin-top: 1px; padding: 3px 5px 4px 4px; }
.lgrid { display: grid; grid-template-columns: 61px 67px 1fr; gap: 1px; align-items: center; }
.right { text-align: right; padding-top: 6px; }
.span2 { grid-column: span 2; margin-left: 2px; }
.sel { position: relative; display: block; height: 13px; }
.lgrid .sel { margin-top: 2px; }
.sel select { appearance: none; display: block; width: 100%; height: 100%; padding-left: 1px; background: #fff; border: 1px solid #777; border-right-color: #ccc; border-bottom-color: #ccc; }
.sel::after { content: "▼"; position: absolute; right: 1px; top: 1px; bottom: 1px; width: 9px; background: #eee; border-right: 1px solid #777; border-bottom: 1px solid #777; font: 5px/10px "DejaVu Sans", sans-serif; color: #000; text-align: center; pointer-events: none; }
.opts { display: flex; justify-content: space-between; padding-top: 7px; }
.opts .sub { padding-left: 11px; color: #aaa; margin-top: 2px; }
.scale { display: grid; width: 48px; gap: 1px; }

.palette { display: flex; align-items: center; gap: 2px; height: 22px; border-bottom: 1px solid #999; }
.palette button { width: 15px; height: 16px; border: 1px solid #0003; }
.ctl { width: 11px; padding-left: 1px; display: grid; line-height: 9px; font-size: 9px; }
.k1 { background: #000; } .k2 { background: #00f; } .k3 { background: #f00000; } .k4 { background: #00f812; } .k5 { background: #f58078; }
.k6 { background: #ff0; } .k7 { background: #1e90ff; } .k8 { background: #8b3510; } .k9 { background: #808000; } .k10 { background: #008060; }
.k11 { background: #fa4500; } .k12 { background: #3c0080; } .k13 { background: #fcd0d8; } .k14 { background: #ab9cf0; } .k15 { background: #d2ff90; }
.k16 { background: #f59050; } .k17 { background: #db7098; } .k18 { background: #8470d4; } .k19 { background: #76de76; } .k20 { background: #b0a070; }
.status { display: flex; gap: 2px; height: 13px; padding-top: 2px; }
.status span { border: 1px solid #aaa; border-bottom: 0; border-left-color: #ccc; line-height: 10px; white-space: nowrap; }
.msg { flex: 1; }
.status .p1 { width: 17px; } .status .p2 { width: 6px; } .status .p3 { width: 158px; } .status .p4 { width: 123px; }

.dialog { position: absolute; left: 442px; top: 216px; width: 397px; padding: 0 5px 5px; background: #e8e069; border: 1px solid #d0c858; }
.dhead { position: relative; display: flex; justify-content: flex-end; height: 20px; }
.dhead h2 { position: absolute; left: 0; right: 0; top: 0; margin: 0; text-align: center; font: 400 11px/19px "Noto Sans", sans-serif; color: #443; pointer-events: none; }
.dhead button { width: 21px; height: 13px; background: #c0504a; color: #fff; font-size: 10px; line-height: 10px; }
.dbody { background: #efeeee; padding: 4px 3px 3px 4px; display: flex; flex-direction: column; }
.dtabs { display: flex; height: 14px; }
.dtabs button { padding: 0 3px; border-right: 1px solid #555; }
.dtabs .on { padding-right: 4px; height: 11px; }
.sheet { border-right: 2px solid #777; border-bottom: 2px solid #777; border-top: 1px solid #fff; padding: 2px 4px 4px 1px; }
.panes { display: flex; gap: 3px; height: 195px; padding-bottom: 2px; border-bottom: 1px solid #ccc; }
.list { width: 43px; margin: 0; padding: 0 1px; list-style: none; background: #fff; border: 1px solid #777; border-right: 0; border-bottom: 0; line-height: 11px; }
.params { flex: 1; border: 1px solid #999; border-right: 2px solid #999; border-bottom: 2px solid #888; padding: 0 2px; }
.axes { display: flex; height: 17px; width: 278px; padding-left: 16px; border-bottom: 1px solid #aaa; align-items: center; }
.axes label { width: 32px; }
.two { display: grid; grid-template-columns: 130px 1fr; }
.first { padding-top: 2px; width: 220px; height: 79px; border-bottom: 1px solid #aaa; }
.rows { display: grid; grid-template-columns: 54px 35px 1fr; grid-auto-rows: 19px; column-gap: 3px; align-items: center; white-space: nowrap; }
.rows > label { text-align: right; }
.rows > input { width: 100%; }
.rows input { padding-left: 1px; }
.top { grid-template-rows: 17px 17px 20px 17px; }
.mode { grid-template-columns: 57px 58px; grid-auto-rows: 17px; column-gap: 2px; }
.step { display: flex; gap: 4px; align-items: center; }
.step input { width: 36px; } .step .btn { width: 18px; height: 15px; line-height: 8px; }
.checks { padding: 6px 0 0 19px; display: grid; grid-auto-rows: 11px; }
.speeds { padding-top: 5px; }
.acc { grid-template-columns: 60px 35px 1fr; column-gap: 2px; }
.keying { margin-top: 2px; width: 279px; }
.keying .rows { grid-template-columns: 53px 35px 25px 1fr; grid-auto-rows: 16px; padding-bottom: 2px; }
.keying .rows .inv { margin-left: 3px; }
.actions { display: flex; align-items: center; padding: 4px 36px 0 0; }
.progress { flex: 1; height: 16px; border: 1px solid #aaa; border-right: 0; border-bottom-color: #ddd; margin-right: 2px; }
.actions .btn { width: 38px; }
.actions .def { border: 1px solid #444; border-right-width: 2px; }
.exit { width: 55px; align-self: flex-end; margin: 2px 5px 0 0; border: 1px solid #666; border-right-width: 2px; border-bottom-width: 2px; }

.cursor { position: absolute; left: 792px; top: 241px; width: 8px; height: 13px; }
.brand { position: absolute; left: 99px; top: 59px; display: flex; gap: 8px; color: #fff; font: 700 38px/57px "DejaVu Sans", sans-serif; pointer-events: none; }
.brand svg { width: 62px; height: 62px; }
.caption { position: absolute; margin: 0; color: #fff; font: 700 24px/31px "Liberation Sans", Arial, sans-serif; text-align: center; white-space: nowrap; text-shadow: 1px 1px #000, 2px 1px #000, 2px 2px #000, 3px 2px #000, 3px 3px #000, 4px 3px #000; pointer-events: none; }
.head { right: 92px; top: 68px; }
.site { right: 70px; top: 642px; }
```
